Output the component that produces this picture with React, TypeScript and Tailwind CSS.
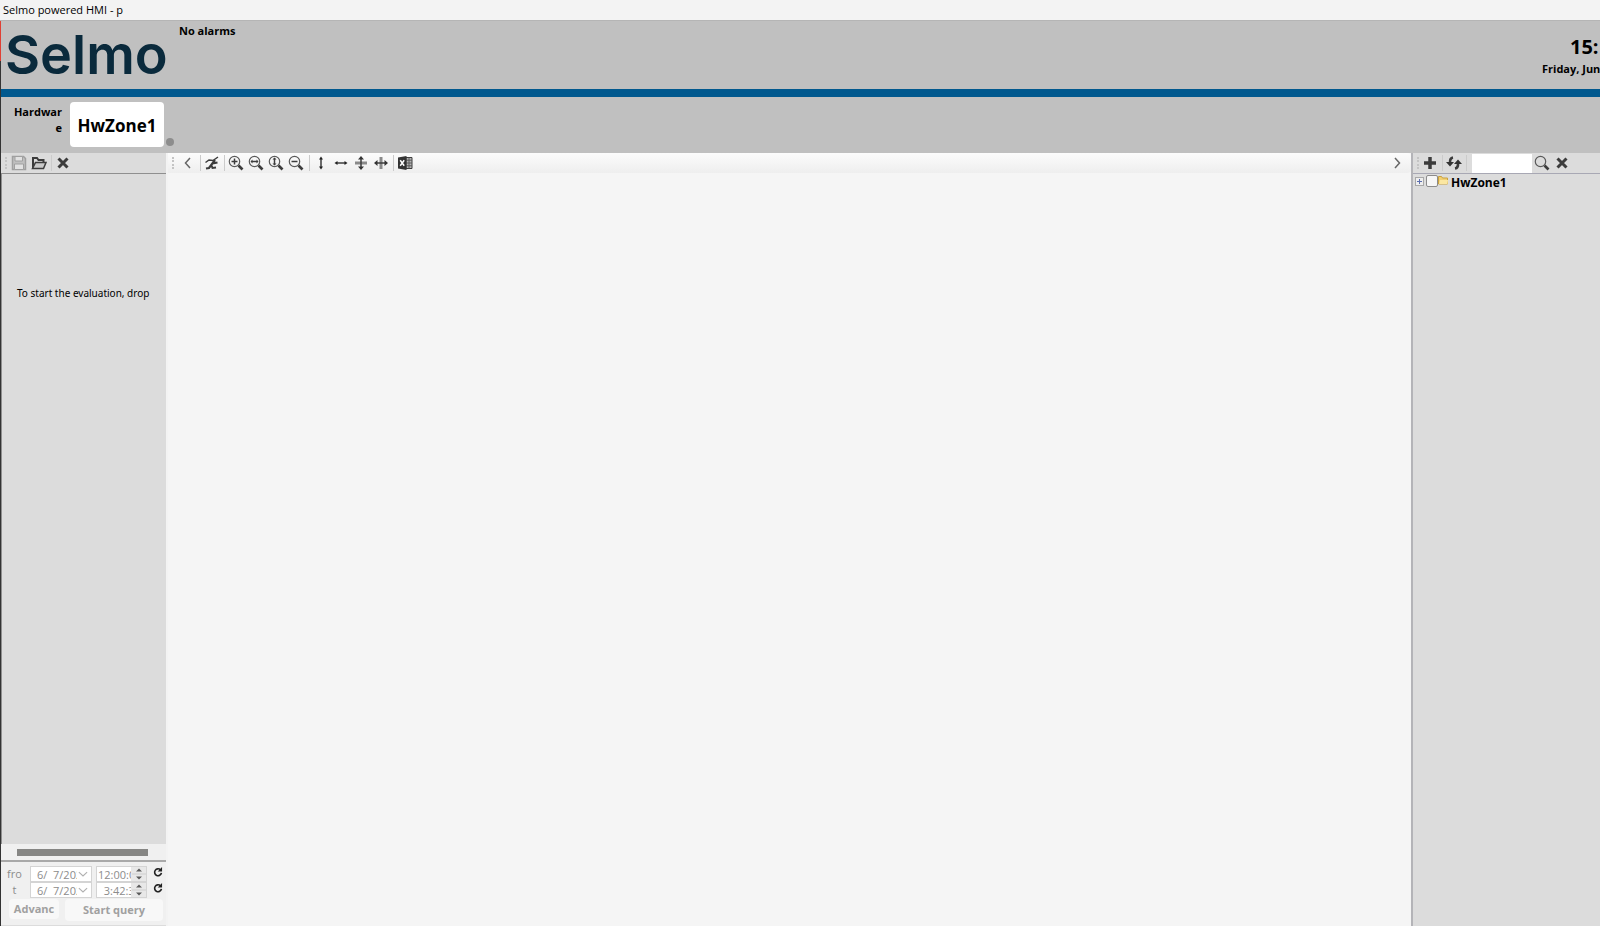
import React, { ReactNode } from "react";

type IconProps = { children: ReactNode; size?: string };

const Icon = ({ children, size = "size-4" }: IconProps) => (
    <svg viewBox="0 0 16 16" className={`${size} shrink-0`} fill="none" stroke="#3c3c3c" strokeWidth="1.5" aria-hidden="true">
        {children}
    </svg>
);

const ToolButton = ({ label, children }: { label: string; children: ReactNode }) => (
    <button type="button" aria-label={label} title={label} className="flex h-5 w-5 shrink-0 items-center justify-center">
        {children}
    </button>
);

const Grip = () => <span className="ml-1 h-3 w-0.5 shrink-0 border-l-2 border-dotted border-[#c4c4c4]" />;

const Separator = () => <span className="ml-0.5 mr-px h-4 w-px shrink-0 bg-[#cbcbcb]" />;

const CloseIcon = () => (
    <Icon>
        <path d="M3.5 3.5l9 9M12.5 3.5l-9 9" strokeWidth="3" />
    </Icon>
);

const Magnifier = ({ children }: { children?: ReactNode }) => (
    <Icon>
        <circle cx="6.5" cy="6.5" r="5.2" strokeWidth="1.2" stroke="#5a5a5a" />
        <path d="M10.5 10.5l4 4" strokeWidth="2.6" />
        {children}
    </Icon>
);

const Header = () => (
    <header className="flex h-[76px] shrink-0 items-start overflow-hidden border-b-8 border-[#00588e] bg-[#c0c0c0]">
        <div className="w-[178px] shrink-0 pl-1 pt-[3px] font-[Inter] text-[54px] font-semibold leading-[62px] text-[#0a2a3c]">Selmo</div>
        <p className="flex-1 pt-0.5 text-[11px] font-bold leading-4">No alarms</p>
        <div className="w-[58px] shrink-0 overflow-hidden whitespace-nowrap pt-3 font-bold">
            <p className="pl-7 text-xl leading-7">15:</p>
            <p className="text-[11px] leading-4">Friday, Jun</p>
        </div>
    </header>
);

const ZoneBar = () => (
    <nav className="flex h-14 shrink-0 items-start bg-[#c0c0c0] pt-[5px]">
        <p className="w-[61px] break-all pl-2.5 pt-0.5 text-right text-[11px] font-bold leading-4">Hardware</p>
        <button type="button" className="ml-2 h-[45px] w-[94px] rounded-sm bg-white pt-0.5 text-[17px] font-bold">HwZone1</button>
        <span className="ml-0.5 mt-9 size-2 rounded-full bg-[#8d8d8d]" />
    </nav>
);

const RangeRow = ({ id, label, date, time }: { id: string; label: string; date: string; time: string }) => (
    <div className="flex h-4 items-center">
        <label htmlFor={id} className="w-[27px] pr-1 text-center">{label}</label>
        <div className="flex h-full w-[62px] items-center border border-[#d4d4d4] bg-white">
            <input id={id} defaultValue={date} className="h-full w-[46px] whitespace-pre pl-1.5" />
            <button type="button" aria-label={`${label} date`}>
                <Icon size="size-3"><path d="M2.5 5.5L8 10.5l5.500-5" stroke="#b0b0b0" /></Icon>
            </button>
        </div>
        <div className="ml-1 flex h-full w-[51px] items-center border border-[#d4d4d4] bg-white">
            <input aria-label={`${label} time`} defaultValue={time} className="h-full w-[34px] whitespace-pre pl-px" />
            <button type="button" aria-label={`${label} time step`} className="flex h-full w-[15px] items-center justify-center bg-[#e8e8e8]">
                <svg viewBox="0 0 14 14" className="size-3.5" fill="#5a5a5a" aria-hidden="true">
                    <path d="M4 4.500L7 1.500l3 3zM4 9.500l3 3 3-3z" />
                    <path d="M0 6.500h14v1H0z" fill="#cfcfcf" />
                </svg>
            </button>
        </div>
        <button type="button" aria-label={`Reset ${label}`} className="-mt-1 ml-1.5">
            <Icon size="size-2.5">
                <path d="M12 4.500A5.500 5.500 0 1 0 13.500 9.500" strokeWidth="2.600" stroke="#222222" />
                <path d="M14.500 0v7H7.500z" fill="#222222" stroke="none" />
            </Icon>
        </button>
    </div>
);

const QueryPanel = () => (
    <aside className="flex w-[165px] shrink-0 flex-col bg-[#f0f0f0]">
        <div className="flex h-5 shrink-0 items-center bg-[#dcdcdc]">
            <Grip />
            <span className="ml-0.5">
                <ToolButton label="Save">
                    <Icon>
                        <path d="M1.500 1.500h11l2 2v11h-13z" stroke="#a0a0a0" fill="#c0c0c0" />
                        <path d="M4 1.500h7.500v4.500H4zM3.500 9h9v5.500h-9z" fill="#e2e2e2" stroke="#a0a0a0" strokeWidth="1" />
                    </Icon>
                </ToolButton>
            </span>
            <ToolButton label="Open">
                <Icon>
                    <path d="M2 13V3h4l1.500 2h5v2.500" strokeWidth="2" />
                    <path d="M1.500 13.500L4.500 7.500h10.500l-2.500 6z" fill="#c9c9c9" />
                </Icon>
            </ToolButton>
            <Separator />
            <ToolButton label="Remove">
                <CloseIcon />
            </ToolButton>
        </div>
        <div className="flex-1 overflow-hidden border-l border-t border-[#8f8f8f] bg-[#dcdcdc] pt-[111px]">
            <p className="whitespace-nowrap pl-[15px] font-['Noto_Sans',sans-serif] text-[10px] leading-4">To start the evaluation, drop</p>
        </div>
        <div className="h-[18px] shrink-0 border-b-2 border-[#a9a9a9] pl-4 pt-[5px]">
            <div className="h-[7px] w-[131px] bg-[#868684]" />
        </div>
        <form className="h-16 shrink-0 border-b border-[#dcdcdc] pl-0.5 pt-1 text-[11px] text-[#8c8c8c]">
            <RangeRow id="from" label="fro" date="6/  7/2024" time="12:00:00 AM" />
            <RangeRow id="to" label="t" date="6/  7/2024" time="  3:42:32 PM" />
            <div className="mt-px flex gap-1.5 pl-1.5 font-bold text-[#a0a0a0]">
                <button type="button" className="h-5 w-[50px] rounded-sm bg-[#f8f8f8]">Advanc</button>
                <button type="button" className="h-[22px] w-[98px] rounded-sm bg-[#f8f8f8]">Start query</button>
            </div>
        </form>
    </aside>
);

const ChartArea = () => (
    <main className="ml-0.5 min-w-0 flex-1 bg-[#f5f5f5]">
        <div className="flex h-5 items-center rounded-r-sm bg-gradient-to-b from-[#fcfcfc] to-[#eeeeee]">
            <Grip />
            <span className="ml-1">
                <ToolButton label="Collapse left">
                    <Icon><path d="M10 3L5.500 8l4.500 5" stroke="#666666" /></Icon>
                </ToolButton>
            </span>
            <Separator />
            <ToolButton label="Curve settings">
                <Icon>
                    <path d="M1.500 7.500L5 5l4 .5 5-3.500" strokeWidth="1.500" />
                    <path d="M2 13.500l3-.5L11 5M8.500 8.500l5-1" strokeWidth="2.200" />
                    <path d="M7.500 10.500l1 2.500 3.500-.5" strokeWidth="2" />
                </Icon>
            </ToolButton>
            <Separator />
            <ToolButton label="Zoom in">
                <Magnifier><path d="M3.500 6.500h6M6.500 3.500v6" /></Magnifier>
            </ToolButton>
            <ToolButton label="Zoom horizontally">
                <Magnifier><path d="M3.500 6.500h6" /><path d="M2.500 6.500l2-2v4zM10.500 6.500l-2-2v4z" fill="#3c3c3c" stroke="none" /></Magnifier>
            </ToolButton>
            <ToolButton label="Zoom vertically">
                <Magnifier><path d="M6.500 3.500v6" /><path d="M6.500 2.500l-2 2h4zM6.500 10.500l-2-2h4z" fill="#3c3c3c" stroke="none" /></Magnifier>
            </ToolButton>
            <ToolButton label="Zoom out">
                <Magnifier><path d="M3.500 6.500h6" /></Magnifier>
            </ToolButton>
            <span className="w-px" />
            <Separator />
            <ToolButton label="Stretch vertically">
                <Icon><path d="M8 3v10" /><path d="M8 1.500L6 4.500h4zM8 14.500l-2-3h4z" fill="#222222" stroke="none" /></Icon>
            </ToolButton>
            <ToolButton label="Stretch horizontally">
                <Icon><path d="M3 8h10" /><path d="M1.500 8l3-2v4zM14.500 8l-3-2v4z" fill="#222222" stroke="none" /></Icon>
            </ToolButton>
            <ToolButton label="Fit vertically">
                <Icon>
                    <path d="M2 8h12" stroke="#8a8a8a" strokeWidth="3" />
                    <path d="M8 3v10" />
                    <path d="M8 1L5 4.500h6zM8 15l-3-3.500h6z" fill="#333333" stroke="none" />
                </Icon>
            </ToolButton>
            <ToolButton label="Fit horizontally">
                <Icon>
                    <path d="M8 2v12" stroke="#8a8a8a" strokeWidth="3" />
                    <path d="M3 8h10" />
                    <path d="M1 8l3.500-3v6zM15 8l-3.500-3v6z" fill="#333333" stroke="none" />
                </Icon>
            </ToolButton>
            <Separator />
            <ToolButton label="Export to Excel">
                <Icon>
                    <path d="M9 2.500h6v11H9z" strokeWidth="1" fill="#b5b5b5" />
                    <path d="M9 5.200h6M9 8h6M9 10.800h6M12 2.500v11" strokeWidth="1" stroke="#5a5a5a" />
                    <path d="M1 2.500L9.500 1v14L1 13.500z" fill="#333333" stroke="none" />
                    <path d="M3.200 5.200l4 5.600M7.200 5.200l-4 5.600" stroke="#ffffff" />
                </Icon>
            </ToolButton>
            <span className="ml-auto mr-1">
                <ToolButton label="Collapse right">
                    <Icon><path d="M6 3l4.500 5L6 13" stroke="#666666" /></Icon>
                </ToolButton>
            </span>
        </div>
    </main>
);

const VariableTree = () => (
    <aside className="w-[189px] shrink-0 border-l-2 border-[#b4b4b8] bg-[#dcdcdc]">
        <div className="flex h-5 items-center">
            <Grip />
            <span className="ml-px">
                <ToolButton label="Add">
                    <Icon><path d="M8 2v12M2 8h12" strokeWidth="3.500" /></Icon>
                </ToolButton>
            </span>
            <Separator />
            <ToolButton label="Refresh">
                <Icon>
                    <path d="M7 2.500C4 3 3.800 5 4 8M9 13.500c3-.5 3.200-2.500 3-5.500" strokeWidth="2.600" />
                    <path d="M0 7h8L4 11.500zM8 9h8L12 4.500z" fill="#333333" stroke="none" />
                </Icon>
            </ToolButton>
            <Separator />
            <input type="text" aria-label="Search variables" className="ml-1 h-[19px] w-[60px] bg-white px-1 text-xs" />
            <ToolButton label="Search">
                <Magnifier />
            </ToolButton>
            <ToolButton label="Clear search">
                <CloseIcon />
            </ToolButton>
        </div>
        <div className="flex items-start border-t border-[#a8a8b4] pl-0.5 pt-px">
            <button type="button" aria-label="Expand" className="mt-0.5 flex size-[9px] items-center justify-center border border-[#a8a8a8] bg-[#eeeeee]">
                <svg viewBox="0 0 7 7" className="size-[7px]" stroke="#5d6fae" aria-hidden="true">
                    <path d="M1 3.500h5M3.500 1v5" />
                </svg>
            </button>
            <input id="zone" type="checkbox" className="ml-0.5 size-3 appearance-none rounded-xs border border-[#8c8c8c] bg-[#f6f6f6]" />
            <svg viewBox="0 0 10 10" className="size-2.5" aria-hidden="true">
                <path d="M.500 9V1.500h3l1 1.500h5v6z" fill="#f1cf73" stroke="#c9a13e" />
                <path d="M1 9l1-4h8l-.500 4z" fill="#fbe7a2" />
            </svg>
            <label htmlFor="zone" className="pl-[3px] text-xs font-bold">HwZone1</label>
        </div>
    </aside>
);

export default function App() {
    return (
        <div className="flex h-screen flex-col overflow-hidden bg-[#f3f3f3] font-['Open_Sans','Noto_Sans',sans-serif] text-black">
            <div className="h-[21px] shrink-0 border-b border-[#b5b5b5] pl-[3px] text-[11px] leading-5">Selmo powered HMI - p</div>
            <div className="flex min-h-0 flex-1">
                <div className="flex w-px shrink-0 flex-col bg-[#333333]">
                    <div className="h-10 bg-[#e04034]" />
                </div>
                <div className="flex min-w-0 flex-1 flex-col">
                    <Header />
                    <ZoneBar />
                    <div className="flex min-h-0 flex-1">
                        <QueryPanel />
                        <ChartArea />
                        <VariableTree />
                    </div>
                </div>
            </div>
        </div>
    );
}
